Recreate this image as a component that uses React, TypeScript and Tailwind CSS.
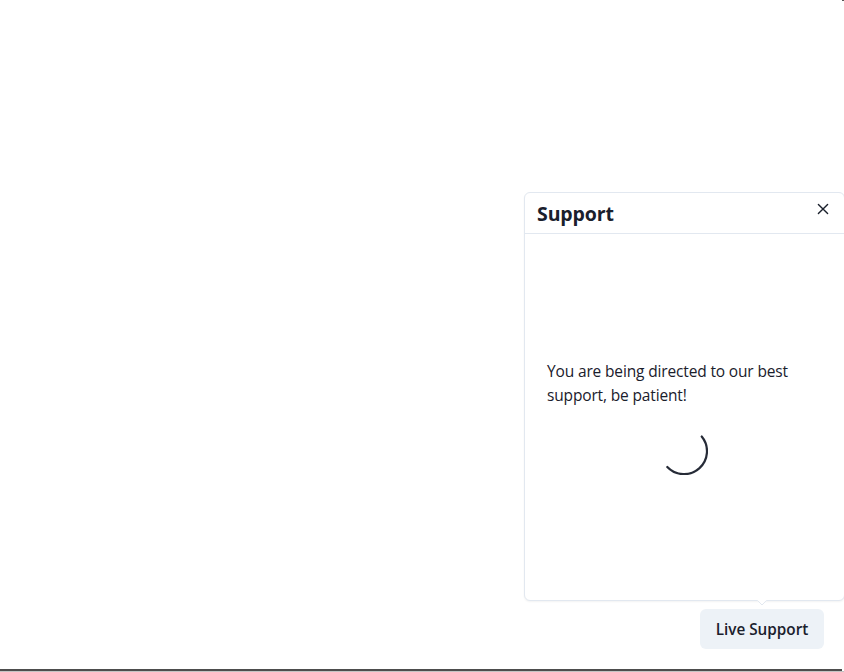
function CloseIcon() {
  return (
    <svg width="12" height="12" viewBox="0 0 12 12" fill="none" stroke="#1a202c" strokeWidth="1.4" strokeLinecap="round">
      <path d="M1.4 1.4 10.6 10.6M10.6 1.4 1.4 10.6" />
    </svg>
  );
}

function Spinner() {
  return (
    <svg className="block" width="48" height="48" viewBox="0 0 48 48" fill="none" stroke="#1a202c" strokeOpacity=".95" strokeWidth="2.2" strokeLinecap="round">
      <path d="M41.7 9.5A23 23 0 0 1 7.3 40" />
    </svg>
  );
}

export default function App() {
  return (
    <div className="flex h-[672px] w-[844px] flex-col overflow-hidden bg-white font-['Open_Sans','Noto_Sans',sans-serif] text-[#1a202c]">
      <div className="h-px w-0.5 shrink-0 self-end bg-[#555555]" />
      <div className="-mr-px mt-[191px] flex h-[409px] w-[321px] shrink-0 flex-col self-end rounded-md border border-[#e2e8f0] bg-white shadow-[0_1px_2px_rgba(0,0,0,0.05)]">
        <header className="flex h-[41px] shrink-0 justify-between border-b border-[#e2e8f0] pl-3 pr-[15px]">
          <h2 className="pt-[6px] text-[19.5px] font-bold leading-[30px] tracking-[-0.1px]">Support</h2>
          <button className="mt-[10px] flex h-3 w-3" aria-label="Close"><CloseIcon /></button>
        </header>
        <div className="flex flex-1 flex-col pl-[22px] pt-[125px]">
          <p className="whitespace-nowrap text-[15.5px] leading-6 tracking-[-0.15px]">
            You are being directed to our best<br />support, be patient!
          </p>
          <div className="ml-[113px] mt-5"><Spinner /></div>
        </div>
      </div>
      <div className="relative mr-5 mt-2 flex h-10 w-[124px] shrink-0 self-end">
        <svg className="absolute -top-[9px] left-[57px]" width="10" height="7" viewBox="0 0 10 7">
          <path d="M0 0H10V.5L5 5 0 .5Z" fill="white" />
          <path d="M0 .5H.6L5 5 9.4.5H10" fill="none" stroke="#e2e8f0" />
        </svg>
        <button className="h-10 w-full whitespace-nowrap rounded-md bg-[#edf2f7] pt-px text-[15.3px] font-semibold">Live Support</button>
      </div>
      <div className="mt-5 h-0.5 w-[842px] shrink-0 bg-[#4d4d4d]" />
      <div className="h-px w-full shrink-0 bg-[#c4c4c4]" />
    </div>
  );
}
